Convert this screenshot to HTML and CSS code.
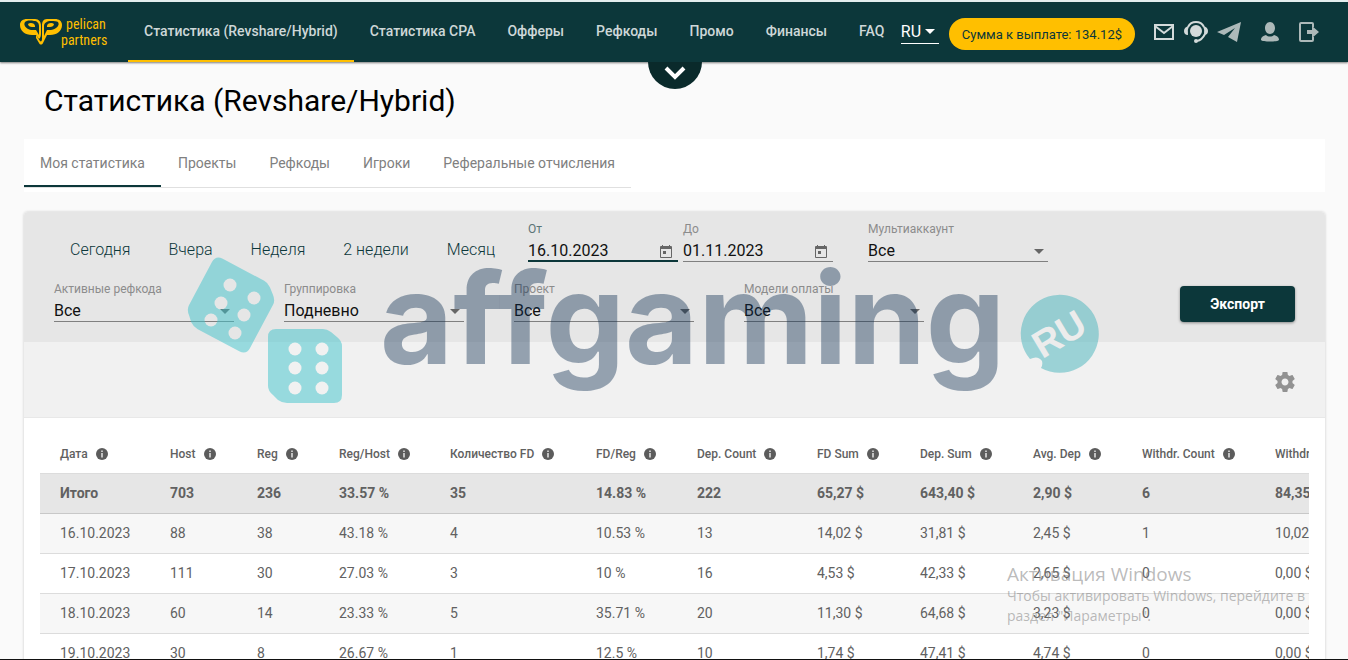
FILE: index.html
```html
<!DOCTYPE html>
<html lang="ru">
<head>
<meta charset="utf-8">
<title>Статистика (Revshare/Hybrid)</title>
<link rel="stylesheet" href="styles.css">
</head>
<body>
<header class="topbar">
  <a class="logo" href="#" aria-label="pelican partners">
    <svg width="92" height="36" viewBox="0 0 92 36">
      <g transform="translate(0 2)">
        <path fill="#ffbf00" fill-rule="evenodd" d="M7 4H15C19 4 21 7 21 11V18C21 22 20 23 19 24L16 20H12C5 20 0 16 0 10C0 6 3 4 7 4ZM5 7C3 10 6 14 11 15H16L19 20V11C19 8 17 6 14 6C9 5 6 6 5 7ZM8 9C10 7 15 8 15 11V12H12C10 12 8 11 8 9Z"/>
        <path fill="#ffbf00" fill-rule="evenodd" d="M35 4H27C23 4 22 7 22 11V24C22 26 21 27 20 26L16 20V23L19 28C20 30 22 30 23 28L27 20H30C37 20 42 16 42 10C42 6 39 4 35 4ZM38 7C40 10 37 14 31 15H27L24 21V11C24 8 27 6 31 6C34 6 37 6 38 7ZM34 9C32 7 27 8 27 11V12H30C32 12 34 11 34 9Z"/>
      </g>
      <text class="logo-text" x="46" y="16">pelican</text>
      <text class="logo-text" x="41" y="32">partners</text>
    </svg>
  </a>
  <nav class="nav">
    <a class="nav-link nav-link-active" href="#">Статистика (Revshare/Hybrid)</a>
    <a class="nav-link" href="#">Статистика CPA</a>
    <a class="nav-link" href="#">Офферы</a>
    <a class="nav-link" href="#">Рефкоды</a>
    <a class="nav-link" href="#">Промо</a>
    <a class="nav-link" href="#">Финансы</a>
    <a class="nav-link" href="#">FAQ</a>
  </nav>
  <div class="tools">
    <button class="lang" type="button">RU
      <svg width="10" height="5" viewBox="0 0 10 5"><path fill="#fff" d="M0 0H10L5 5Z"/></svg>
    </button>
    <button class="payout" type="button">Сумма к выплате: 134.12$</button>
    <div class="icons">
      <a href="#" aria-label="Почта"><svg width="22" height="18" viewBox="0 0 22 18"><path fill="none" stroke="#d3dada" stroke-width="2" d="M2 2H20V16H2ZM2 3L11 10L20 3"/></svg></a>
      <a href="#" aria-label="Поддержка"><svg width="24" height="24" viewBox="0 0 24 24"><circle cx="12" cy="11" r="6" fill="#d3dada"/><path fill="none" stroke="#d3dada" stroke-width="2" d="M4 7A9 9 0 0 1 20 7M21 14Q18 20 13 21"/><path fill="#d3dada" d="M5 6Q0 7 0 11Q0 15 4 15Q3 10 5 6ZM19 6Q24 7 24 11Q24 15 20 15Q21 10 19 6Z"/><circle cx="12" cy="21" r="2" fill="#d3dada"/></svg></a>
      <a href="#" aria-label="Telegram"><svg width="24" height="21" viewBox="0 0 24 21"><path fill="#adb9b9" d="M24 0L0 10L7 13L18 6L11 15L20 20Z"/></svg></a>
      <a class="icon-wide" href="#" aria-label="Профиль"><svg width="20" height="20" viewBox="0 0 20 20"><path fill="#adb9b9" d="M10 0C13 0 15 3 15 6C15 9 13 12 10 12C7 12 5 9 5 6C5 3 7 0 10 0ZM6 13C8 15 12 15 14 13C18 14 19 16 19 18C18 20 2 20 1 18C1 16 2 14 6 13Z"/></svg></a>
      <a class="icon-wide" href="#" aria-label="Выход"><svg width="20" height="20" viewBox="0 0 20 20"><path fill="none" stroke="#adb9b9" stroke-width="2" d="M14 5V2Q14 1 13 1H2Q1 1 1 2V18Q1 19 2 19H13Q14 19 14 18V15"/><path fill="#adb9b9" d="M8 8H13V4L20 10L13 16V12H8Z"/></svg></a>
    </div>
  </div>
  <button class="drawer" type="button" aria-label="Развернуть">
    <svg width="22" height="14" viewBox="0 0 22 14"><path fill="none" stroke="#fff" stroke-width="4" d="M2 2L11 11L20 2"/></svg>
  </button>
</header>

<main class="main">
  <h1 class="title">Статистика (Revshare/Hybrid)</h1>
  <div class="tabs">
    <div class="tab-list">
      <a class="tab tab-active" href="#">Моя статистика</a>
      <a class="tab" href="#">Проекты</a>
      <a class="tab" href="#">Рефкоды</a>
      <a class="tab" href="#">Игроки</a>
      <a class="tab" href="#">Реферальные отчисления</a>
    </div>
  </div>

  <section class="card">
    <form class="filters">
      <div class="filter-row">
        <div class="presets">
          <button class="preset" type="button">Сегодня</button>
          <button class="preset" type="button">Вчера</button>
          <button class="preset" type="button">Неделя</button>
          <button class="preset" type="button">2 недели</button>
          <button class="preset" type="button">Месяц</button>
        </div>
        <div class="dates">
          <div class="field field-date field-active">
            <label for="from">От</label>
            <input id="from" type="text" value="16.10.2023">
            <svg class="calendar" width="12" height="13" viewBox="0 0 12 13"><path fill="#666" fill-rule="evenodd" d="M2 0H3V1H9V0H10V1H11Q12 1 12 2V12Q12 13 11 13H1Q0 13 0 12V2Q0 1 1 1H2ZM1 4V12H11V4ZM3 6H6V9H3Z"/></svg>
          </div>
          <div class="field field-date">
            <label for="to">До</label>
            <input id="to" type="text" value="01.11.2023">
            <svg class="calendar" width="12" height="13" viewBox="0 0 12 13"><path fill="#666" fill-rule="evenodd" d="M2 0H3V1H9V0H10V1H11Q12 1 12 2V12Q12 13 11 13H1Q0 13 0 12V2Q0 1 1 1H2ZM1 4V12H11V4ZM3 6H6V9H3Z"/></svg>
          </div>
        </div>
        <div class="field field-multi">
          <label for="multi">Мультиаккаунт</label>
          <select id="multi"><option>Все</option></select>
          <svg class="arrow" width="10" height="5" viewBox="0 0 10 5"><path fill="#666" d="M0 0H10L5 5Z"/></svg>
        </div>
      </div>
      <div class="filter-row filter-row-wide">
        <div class="field">
          <label for="refcode">Активные рефкода</label>
          <select id="refcode"><option>Все</option></select>
          <svg class="arrow" width="10" height="5" viewBox="0 0 10 5"><path fill="#666" d="M0 0H10L5 5Z"/></svg>
        </div>
        <div class="field">
          <label for="group">Группировка</label>
          <select id="group"><option>Подневно</option></select>
          <svg class="arrow" width="10" height="5" viewBox="0 0 10 5"><path fill="#666" d="M0 0H10L5 5Z"/></svg>
        </div>
        <div class="field">
          <label for="project">Проект</label>
          <select id="project"><option>Все</option></select>
          <svg class="arrow" width="10" height="5" viewBox="0 0 10 5"><path fill="#666" d="M0 0H10L5 5Z"/></svg>
        </div>
        <div class="field">
          <label for="model">Модели оплаты</label>
          <select id="model"><option>Все</option></select>
          <svg class="arrow" width="10" height="5" viewBox="0 0 10 5"><path fill="#666" d="M0 0H10L5 5Z"/></svg>
        </div>
        <button class="export" type="button">Экспорт</button>
      </div>
    </form>
    <div class="settings">
      <button class="gear" type="button" aria-label="Настройки">
        <svg width="24" height="24" viewBox="0 0 24 24"><path fill="#929292" d="M19.43 12.98c.04-.32.07-.64.07-.98s-.03-.66-.07-.98l2.11-1.65c.19-.15.24-.42.12-.64l-2-3.46c-.12-.22-.39-.3-.61-.22l-2.49 1c-.52-.4-1.08-.73-1.69-.98l-.38-2.65C14.46 2.18 14.25 2 14 2h-4c-.25 0-.46.18-.49.42l-.38 2.65c-.61.25-1.17.59-1.69.98l-2.49-1c-.23-.09-.49 0-.61.22l-2 3.46c-.13.22-.07.49.12.64l2.11 1.65c-.04.32-.07.65-.07.98s.03.66.07.98l-2.11 1.65c-.19.15-.24.42-.12.64l2 3.46c.12.22.39.3.61.22l2.49-1c.52.4 1.08.73 1.69.98l.38 2.65c.03.24.24.42.49.42h4c.25 0 .46-.18.49-.42l.38-2.65c.61-.25 1.17-.59 1.69-.98l2.49 1c.23.09.49 0 .61-.22l2-3.46c.12-.22.07-.49-.12-.64l-2.11-1.65zM12 15.5c-1.93 0-3.5-1.57-3.5-3.5s1.57-3.5 3.5-3.5 3.5 1.57 3.5 3.5-1.57 3.5-3.5 3.5z"/></svg>
      </button>
    </div>
    <div class="table-wrap">
      <table class="stats">
        <colgroup id="cols"></colgroup>
        <thead><tr id="head"></tr></thead>
        <tbody id="rows"></tbody>
      </table>
    </div>

    <svg class="brand" width="920" height="160" viewBox="184 252 920 160" aria-hidden="true">
      <mask id="pips" maskUnits="userSpaceOnUse" x="184" y="252" width="170" height="160">
        <rect x="184" y="252" width="170" height="160" fill="#fff"/>
        <g fill="#000">
          <circle cx="230" cy="285" r="6.5"/><circle cx="254" cy="298" r="6.5"/>
          <circle cx="221" cy="303" r="6.5"/><circle cx="244" cy="315" r="6.5"/>
          <circle cx="211" cy="320" r="6.5"/><circle cx="235" cy="333" r="6.5"/>
          <circle cx="295" cy="349" r="6.5"/><circle cx="322" cy="349" r="6.5"/>
          <circle cx="295" cy="368" r="6.5"/><circle cx="322" cy="368" r="6.5"/>
          <circle cx="295" cy="388" r="6.5"/><circle cx="322" cy="388" r="6.5"/>
        </g>
      </mask>
      <g class="dice" mask="url(#pips)">
        <path transform="translate(231 305) rotate(28)" d="M-29-37H18Q22-37 26-34L32-29Q37-25 37-20V29Q37 37 29 37H-18Q-23 37-27 34L-32 29Q-37 25-37 20V-29Q-37-37-29-37Z"/>
        <path transform="translate(305 366)" d="M-29-37H18Q22-37 26-34L32-29Q37-25 37-20V29Q37 37 29 37H-18Q-23 37-27 34L-32 29Q-37 25-37 20V-29Q-37-37-29-37Z"/>
      </g>
      <text class="brand-name" x="380" y="364">affgaming</text>
      <path class="badge" d="M1041 368A39 39 0 1 0 1030 359Q1038 355 1042 361Q1043 365 1041 368Z"/>
      <text class="badge-text" text-anchor="middle" transform="translate(1059 334) rotate(-31)" x="0" y="13">RU</text>
    </svg>
  </section>
</main>

<div class="activation">
  <div class="activation-title">Активация Windows</div>
  <div>Чтобы активировать Windows, перейдите в</div>
  <div>раздел "Параметры".</div>
</div>
<script src="app.js"></script>
</body>
</html>
```
FILE: styles.css
```css
* { box-sizing: border-box; }

body {
  margin: 0;
  height: 100vh;
  overflow: hidden;
  position: relative;
  background: #fafafa;
  border-bottom: 1px solid #111;
  font-family: Roboto, "Liberation Sans", sans-serif;
  font-size: 14px;
  color: #616161;
}

button, input, select { font-family: inherit; border: 0; background: none; padding: 0; margin: 0; }
button { cursor: pointer; }
a { color: inherit; text-decoration: none; }
svg { display: block; }

.topbar {
  position: relative;
  display: flex;
  height: 62px;
  border-top: 2px solid #e4eeee;
  background: #0c373a;
  box-shadow: 0 1px 2px rgba(0, 0, 0, .5);
}
.logo { flex: none; width: 128px; padding: 11px 0 0 20px; }
.logo-text { font-family: "Liberation Sans Narrow", "Roboto Condensed", Roboto, sans-serif; font-size: 14px; fill: #ffbf00; }
.nav { display: flex; }
.nav-link {
  padding: 0 16px;
  line-height: 58px;
  border-bottom: 2px solid transparent;
  font-weight: 500;
  white-space: nowrap;
  color: #ced7d8;
}
.nav-link-active { border-bottom-color: #ffbf00; }
.tools { display: flex; align-items: center; margin-left: auto; padding-right: 29px; }
.lang {
  display: flex;
  align-items: center;
  gap: 4px;
  width: 38px;
  height: 24px;
  border-bottom: 1px solid #fff;
  font-size: 16px;
  color: #fff;
}
.payout {
  height: 32px;
  margin: 4px 18px 0 10px;
  padding: 0 13px;
  border-radius: 16px;
  background: #ffbf00;
  font-size: 13px;
  color: #0c373a;
  white-space: nowrap;
}
.icons { display: flex; align-items: center; gap: 9px; }
.icon-wide { margin-left: 10px; }
.drawer {
  position: absolute;
  top: 60px;
  left: 50%;
  width: 54px;
  height: 27px;
  margin-left: -26px;
  display: flex;
  justify-content: center;
  padding-top: 4px;
  border-radius: 0 0 27px 27px;
  background: #0a2a2b;
}

.main { padding: 0 23px 0 24px; }
.title { margin: 0; padding: 19px 20px; font-size: 30px; line-height: 39px; font-weight: 400; color: #000; }
.tabs { height: 53px; margin-bottom: 20px; background: #fff; }
.tab-list { display: inline-flex; gap: 1px; border-bottom: 1px solid #e0e0e0; }
.tab { padding: 2px 16px 0; line-height: 44px; border-bottom: 2px solid transparent; color: #808080; white-space: nowrap; }
.tab-active { border-bottom-color: #0c373a; }

.card { position: relative; border-radius: 4px; background: #fff; box-shadow: 0 0 3px rgba(0, 0, 0, .2); }
.filters { padding: 8px 30px 20px; border-radius: 4px 4px 0 0; background: #e6e6e6; }
.filter-row { display: flex; }
.filter-row-wide { margin-top: 18px; gap: 50px; }
.presets { display: flex; gap: 6px; padding-top: 17px; margin-right: 17px; }
.preset { height: 24px; padding: 0 16px; font-size: 16px; font-weight: 300; color: #0c373a; white-space: nowrap; }
.dates { display: flex; gap: 5px; }
.field { position: relative; width: 180px; height: 42px; border-bottom: 1px solid #808080; }
.field-date { width: 150px; }
.field-active { border-bottom: 2px solid #0c373a; }
.field-multi { margin-left: 35px; }
.field label { display: block; font-size: 12px; line-height: 18px; color: #8c8c8c; }
.field-active label { color: #5b7577; }
.field input, .field select {
  display: block;
  width: 100%;
  height: 24px;
  appearance: none;
  font-size: 16px;
  color: #111;
  outline: 0;
}
.calendar { position: absolute; right: 6px; top: 25px; }
.arrow { position: absolute; right: 4px; top: 29px; }
.export {
  width: 115px;
  height: 36px;
  margin: 6px 0 0 auto;
  border-radius: 4px;
  background: #0c373a;
  box-shadow: 0 1px 3px rgba(0, 0, 0, .4);
  font-size: 14px;
  font-weight: 700;
  color: #fff;
}
.settings { display: flex; justify-content: flex-end; align-items: center; height: 76px; padding: 4px 28px 0; background: #f1f1f1; border-bottom: 1px solid #e8e8e8; }

.table-wrap { margin: 0 16px; padding-top: 16px; overflow: hidden; }
.stats { width: 1355px; table-layout: fixed; border-collapse: collapse; white-space: nowrap; }
.stats th, .stats td { height: 40px; padding: 0 0 0 20px; border-bottom: 1px solid #dcdcdc; text-align: left; }
.stats th { height: 39px; padding-top: 2px; font-size: 12px; font-weight: 500; }
.stats tbody tr:nth-child(even) { background: #f7f7f7; }
.stats .total { background: #e6e6e6; font-weight: 700; }
.stats .total td { border-bottom-color: #c8c8c8; }
.head-cell { display: flex; align-items: center; gap: 8px; }

.brand { position: absolute; left: 160px; top: 40px; pointer-events: none; }
.dice { fill: #40c4cc; opacity: .5; }
.brand-name { font-family: Inter, "Noto Sans", sans-serif; font-weight: 700; font-size: 126px; fill: rgba(10, 42, 78, .4); }
.badge { fill: rgba(70, 180, 188, .5); }
.badge-text { font-family: "Liberation Sans", sans-serif; font-weight: 700; font-size: 38px; fill: #ececec; }

.activation {
  position: absolute;
  top: 563px;
  left: 1007px;
  width: 302px;
  white-space: nowrap;
  pointer-events: none;
  font-family: "Open Sans", "Noto Sans", sans-serif;
  font-size: 14px;
  line-height: 20px;
  color: rgba(130, 130, 130, .55);
}
.activation-title { font-size: 19px; line-height: 23px; }
```
FILE: app.js
```js
const columns = [
  ["Дата", 110], ["Host", 87], ["Reg", 82], ["Reg/Host", 111], ["Количество FD", 146], ["FD/Reg", 101],
  ["Dep. Count", 120], ["FD Sum", 103], ["Dep. Sum", 113], ["Avg. Dep", 109], ["Withdr. Count", 133], ["Withdr. Sum", 140]
];
const data = [
  ["Итого", "703", "236", "33.57 %", "35", "14.83 %", "222", "65,27 $", "643,40 $", "2,90 $", "6", "84,35 $"],
  ["16.10.2023", "88", "38", "43.18 %", "4", "10.53 %", "13", "14,02 $", "31,81 $", "2,45 $", "1", "10,02 $"],
  ["17.10.2023", "111", "30", "27.03 %", "3", "10 %", "16", "4,53 $", "42,33 $", "2,65 $", "0", "0,00 $"],
  ["18.10.2023", "60", "14", "23.33 %", "5", "35.71 %", "20", "11,30 $", "64,68 $", "3,23 $", "0", "0,00 $"],
  ["19.10.2023", "30", "8", "26.67 %", "1", "12.5 %", "10", "1,74 $", "47,41 $", "4,74 $", "0", "0,00 $"]
];
const info = '<svg width="12" height="12" viewBox="0 0 12 12"><circle cx="6" cy="6" r="6" fill="#5c5c5c"/><path fill="#ddd" d="M5.2 2.5H6.8V4H5.2ZM5.2 5H6.8V9.5H5.2Z"/></svg>';
document.getElementById("cols").innerHTML = columns
  .map(([, width]) => `<col style="width:${width}px">`).join("");
document.getElementById("head").innerHTML = columns
  .map(([name]) => `<th><div class="head-cell">${name} ${info}</div></th>`).join("");
document.getElementById("rows").innerHTML = data
  .map((row, i) => `<tr class="${i ? "" : "total"}">${row.map(v => `<td>${v}</td>`).join("")}</tr>`).join("");
```
